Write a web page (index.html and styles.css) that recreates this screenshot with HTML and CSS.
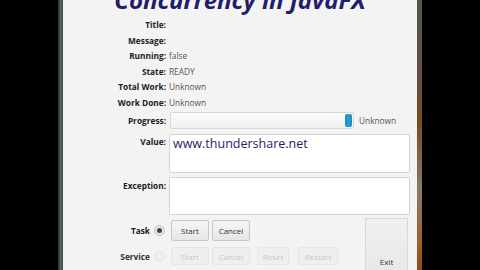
FILE: index.html
```html
<!DOCTYPE html>
<html>
<head>
    <title>Concurrency in JavaFX</title>
    <link rel="stylesheet" href="styles.css">
</head>
<body>
    <div class="edge edge-left"></div>
    <div class="window">
        <h1 class="title">Concurrency in JavaFX</h1>

        <div class="fields">
            <div class="label">Title:</div><div class="value"></div>
            <div class="label">Message:</div><div class="value"></div>
            <div class="label">Running:</div><div class="value">false</div>
            <div class="label">State:</div><div class="value">READY</div>
            <div class="label">Total Work:</div><div class="value">Unknown</div>
            <div class="label">Work Done:</div><div class="value">Unknown</div>

            <div class="label label-progress">Progress:</div>
            <div class="progress-row">
                <div class="progress"><div class="progress-thumb"></div></div>
                <span class="value">Unknown</span>
            </div>

            <div class="label label-top">Value:</div>
            <div class="textbox textbox-value">www.thundershare.net</div>

            <div class="label label-top">Exception:</div>
            <div class="textbox textbox-exc"></div>
        </div>

        <div class="bottom">
            <div class="runners">
                <div class="runner">
                    <span class="runner-label">Task</span>
                    <span class="radio checked"></span>
                    <button class="btn">Start</button>
                    <button class="btn">Cancel</button>
                </div>
                <div class="runner disabled">
                    <span class="runner-label">Service</span>
                    <span class="radio"></span>
                    <button class="btn">Start</button>
                    <button class="btn">Cancel</button>
                    <button class="btn btn-reset">Reset</button>
                    <button class="btn btn-restart">Restart</button>
                </div>
            </div>
            <div class="exit"><span>Exit</span></div>
        </div>
    </div>
    <div class="edge edge-right"></div>
</body>
</html>
```

FILE: styles.css
```css
body {
    background-color: #000;
    margin: 0;
    height: 270px;
    overflow: hidden;
    display: flex;
    padding-left: 58px;
    font-family: 'Open Sans', sans-serif;
}
.edge {
    width: 5px;
    height: 270px;
}
.edge-left {
    background: linear-gradient(to right, #26302c, #5c6a64 60%, #3c4842);
}
.edge-right {
    background: linear-gradient(to bottom, #4d5a4a 0%, #6b4d40 30%, #7a4a22 45%, #8a7a6a 70%, #a0602a 90%, #8a4a1c 100%);
}
.window {
    width: 354px;
    height: 270px;
    background-color: #f3f3f3;
    display: flex;
    flex-direction: column;
}
.title {
    margin: -12px 0 0 0;
    font-size: 24px;
    line-height: 24px;
    font-weight: 700;
    font-style: italic;
    color: #221d6b;
    text-align: center;
}
.fields {
    display: grid;
    grid-template-columns: 103px 1fr;
    grid-template-rows: repeat(6, 15.5px) 19px 44px 42px;
    column-gap: 3px;
    margin-top: 5px;
    padding-right: 7px;
    font-size: 8.3px;
}
.label {
    text-align: right;
    font-weight: 700;
    color: #222;
    line-height: 15.5px;
}
.label-progress {
    margin-top: 2px;
    line-height: 17px;
}
.label-top {
    padding-top: 6px;
    line-height: 13px;
}
.value {
    color: #555;
    line-height: 15.5px;
}
.progress-row {
    display: flex;
    align-items: center;
    gap: 5px;
    margin-top: 2px;
    height: 17px;
}
.progress {
    width: 184px;
    height: 17px;
    margin-left: 1px;
    box-sizing: border-box;
    border: 1px solid #d6d6d6;
    border-radius: 2px;
    background: linear-gradient(#fdfdfd, #f0f0f0);
    display: flex;
    justify-content: flex-end;
    padding: 1px;
}
.progress-thumb {
    width: 7px;
    border-radius: 2px;
    background: linear-gradient(to right, #2a86b8, #1ea3d6, #2a86b8);
}
.textbox {
    box-sizing: border-box;
    background: #fff;
    border: 1px solid #d4d4d4;
    border-radius: 2px;
}
.textbox-value {
    height: 39px;
    margin-top: 5px;
    padding: 1px 3px;
    font-size: 12.5px;
    color: #1e1c6a;
    line-height: 16px;
}
.textbox-exc {
    height: 38px;
    margin-top: 4px;
}
.bottom {
    flex: 1;
    display: flex;
    margin-top: 3px;
    padding-right: 9px;
}
.runners {
    flex: 1;
    display: flex;
    flex-direction: column;
    gap: 6px;
    padding-top: 2px;
}
.runner {
    display: flex;
    align-items: center;
    gap: 3px;
}
.runner-label {
    width: 87px;
    text-align: right;
    font-size: 8.3px;
    font-weight: 700;
    color: #222;
}
.radio {
    width: 11px;
    height: 11px;
    box-sizing: border-box;
    border-radius: 50%;
    border: 1px solid #c4c4c4;
    background: radial-gradient(#f4f4f4, #dcdcdc);
    margin: 0 3px 0 1px;
    display: flex;
    align-items: center;
    justify-content: center;
}
.radio.checked::after {
    content: "";
    width: 5px;
    height: 5px;
    border-radius: 50%;
    background: #444;
}
.btn {
    width: 38px;
    height: 21px;
    padding: 0;
    font-family: 'Open Sans', sans-serif;
    font-size: 8px;
    color: #333;
    background: linear-gradient(#f6f6f6, #e6e6e6);
    border: 1px solid #c6c6c6;
    border-radius: 2px;
}
.btn-reset {
    margin-left: 4px;
    width: 32px;
}
.btn-restart {
    margin-left: 6px;
    width: 40px;
}
.disabled .btn {
    height: 18px;
    color: #c8c8c8;
    border-color: #e6e6e6;
    background: #efefef;
}
.disabled .runner-label {
    color: #333;
}
.disabled .radio {
    border-color: #e4e4e4;
    background: #eeeeee;
}
.exit {
    width: 43px;
    box-sizing: border-box;
    border: 1px solid #d8d8d8;
    border-bottom: none;
    background: linear-gradient(#f0f0f0, #e8e8e8);
    display: flex;
    align-items: flex-end;
    justify-content: center;
    padding-bottom: 3px;
    font-size: 8px;
    color: #333;
}
```
